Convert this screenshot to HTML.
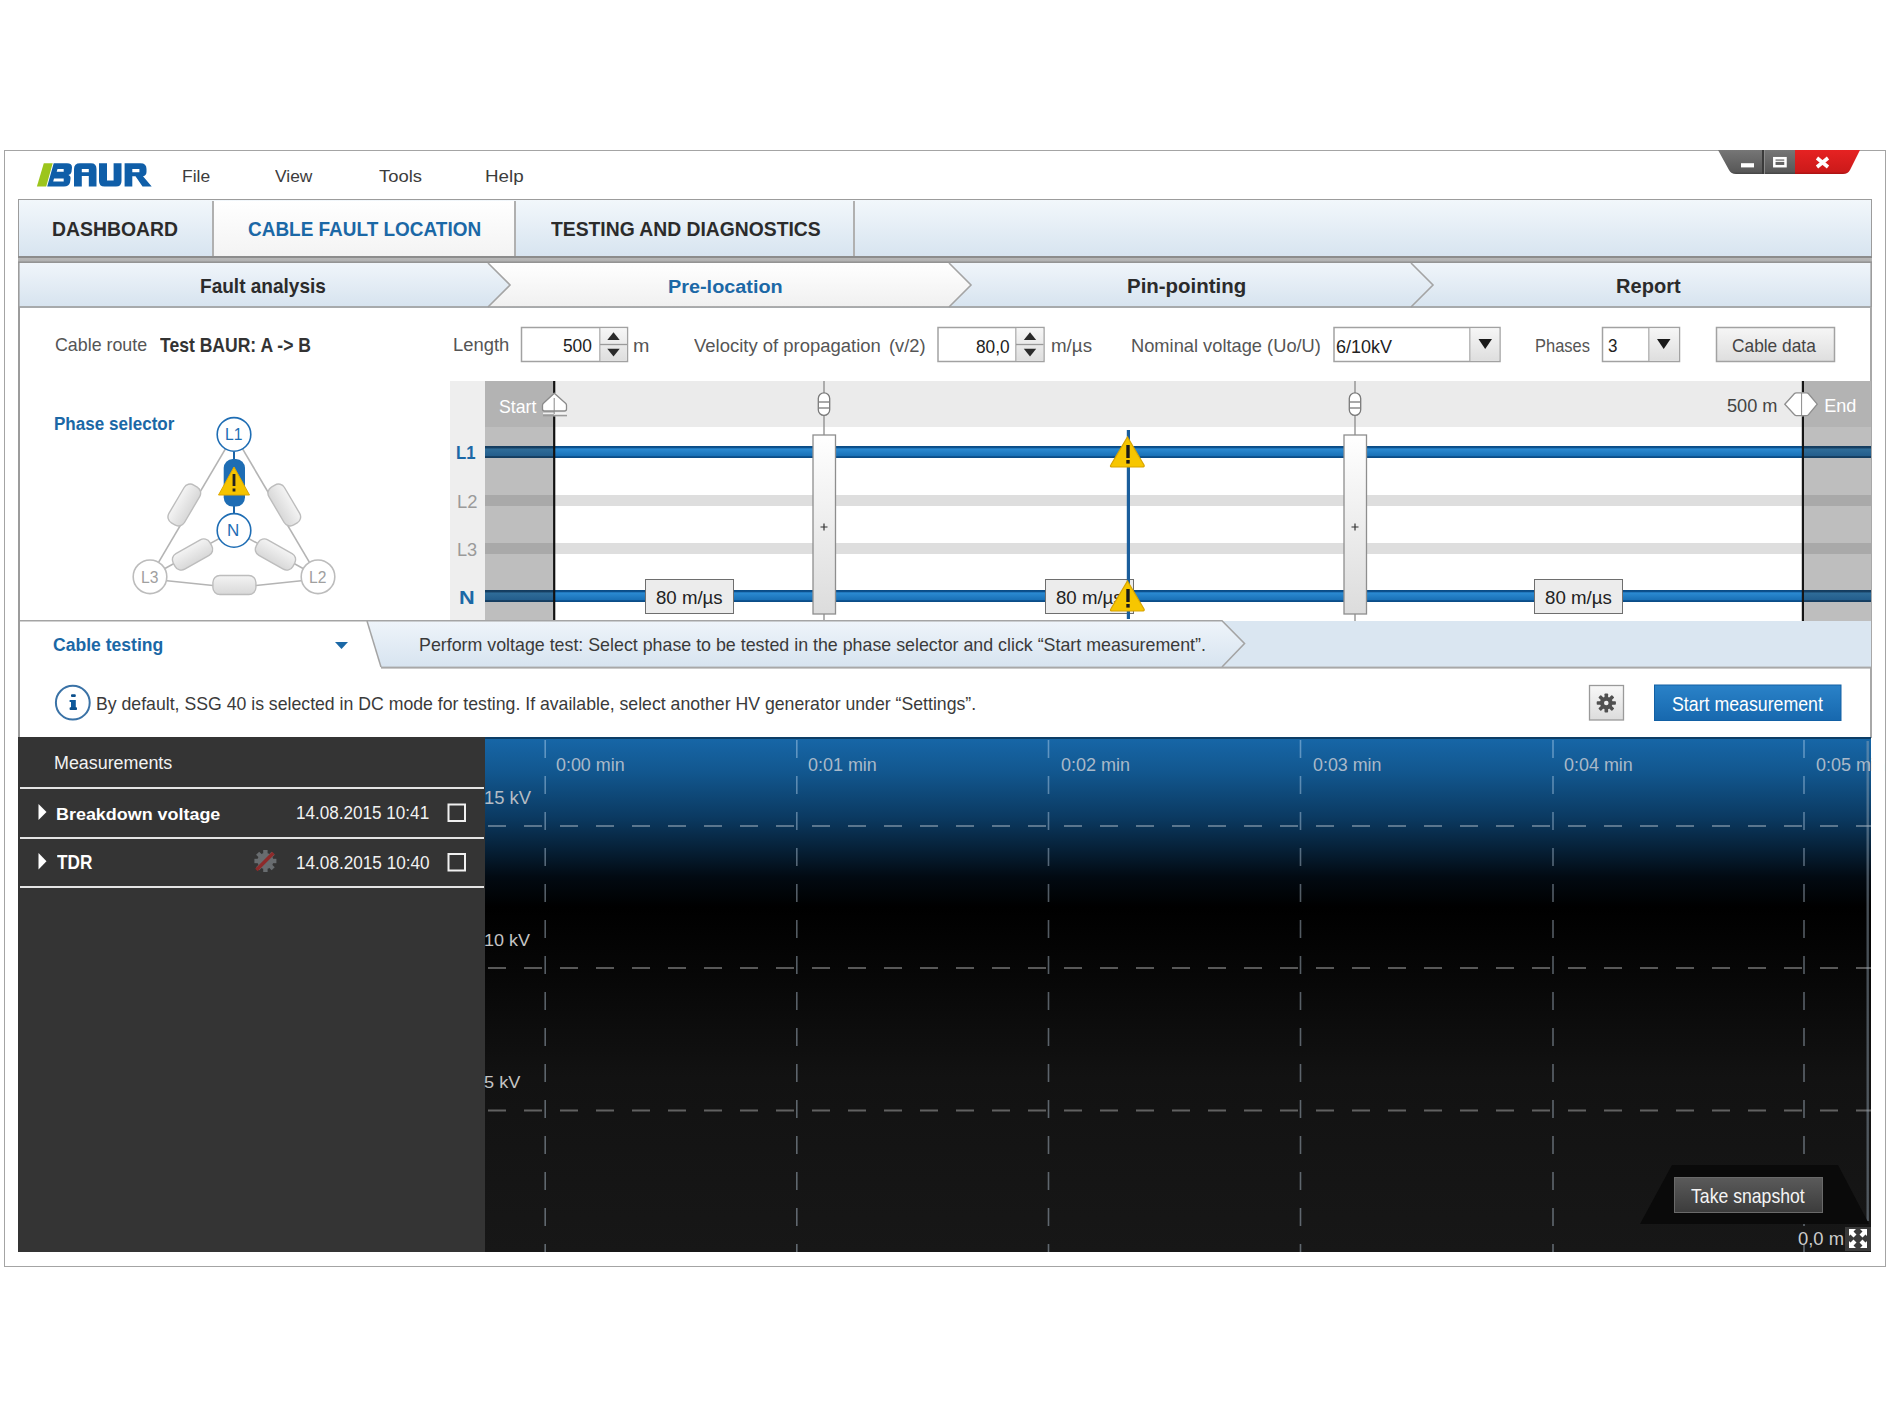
<!DOCTYPE html>
<html><head><meta charset="utf-8">
<style>
*{margin:0;padding:0;box-sizing:border-box}
html,body{width:1890px;height:1417px;overflow:hidden;background:#fff}
body{position:relative;font-family:"Liberation Sans",sans-serif}
.a{position:absolute}
.t{position:absolute;white-space:nowrap;line-height:1;transform-origin:0 0;z-index:5}
svg{position:absolute;overflow:visible}
</style></head><body>
<!-- window frame -->
<div class="a" style="left:4px;top:150px;width:1882px;height:1117px;border:1.5px solid #a4a4a4"></div>

<!-- logo -->
<svg style="left:0;top:0" width="200" height="200">
<polygon points="36.9,186.6 43.8,163.3 52.7,163.3 46.2,186.6" fill="#9cc51c"/>
<path fill="#0f5ea8" fill-rule="evenodd" d="M47.2,186.6 L53.7,163.3 L67,163.3 Q72,163.3 72,167.5 L71.5,172 Q71,174.5 68.5,175 Q71,176 70.5,179 L70,182.5 Q69,186.6 64,186.6 Z M57.5,169 L63.7,169 L63.7,171.8 L56.7,171.8 Z M54,178.4 L63.7,178.4 L63.7,181.5 L53.2,181.5 Z"/>
<path fill="#0f5ea8" fill-rule="evenodd" d="M74,186.6 L74,169 Q74,163.3 80,163.3 L91,163.3 Q96.5,163.3 96.5,169 L96.5,186.6 L88.8,186.6 L88.8,176 L81.8,176 L81.8,186.6 Z M81.8,169 L88.8,169 L88.8,172.2 L81.8,172.2 Z"/>
<path fill="#0f5ea8" d="M99,163.3 L107,163.3 L107,180.4 L113.6,180.4 L113.6,163.3 L121.5,163.3 L121.5,181 Q121.5,186.6 116,186.6 L104.5,186.6 Q99,186.6 99,181 Z"/>
<path fill="#0f5ea8" fill-rule="evenodd" d="M124.6,186.6 L124.6,163.3 L140.5,163.3 Q146.5,163.3 146.5,169 L146.5,172 Q146.5,175.5 143,176.3 L151.7,186.6 L142.5,186.6 L135.5,176.3 L132.3,176.3 L132.3,186.6 Z M132.3,169 L139.4,169 L139.4,172.2 L132.3,172.2 Z"/>
</svg>

<!-- window controls -->
<svg style="left:0;top:0" width="1890" height="200">
<defs>
<linearGradient id="wg" x1="0" y1="0" x2="0" y2="1"><stop offset="0" stop-color="#767676"/><stop offset="0.9" stop-color="#585858"/><stop offset="1" stop-color="#444"/></linearGradient>
<linearGradient id="wr" x1="0" y1="0" x2="0" y2="1"><stop offset="0" stop-color="#e62222"/><stop offset="0.9" stop-color="#cc1a1a"/><stop offset="1" stop-color="#a81212"/></linearGradient>
</defs>
<path d="M1718,150 L1796,150 L1796,174 L1736,174 Q1731,174 1729,170 Z" fill="url(#wg)"/>
<path d="M1795,150 L1860,150 L1850,170 Q1848,174 1843,174 L1795,174 Z" fill="url(#wr)"/>
<rect x="1762" y="150" width="2" height="24" fill="#3a3a3a"/>
<rect x="1764" y="150" width="1" height="24" fill="#8a8a8a"/>
<rect x="1741" y="163.2" width="13" height="4.2" fill="#fff"/>
<rect x="1774.3" y="158.2" width="11.2" height="8" fill="none" stroke="#fff" stroke-width="2.5"/><line x1="1775" y1="161.3" x2="1786" y2="161.3" stroke="#fff" stroke-width="1.2"/>
<path d="M1817,158 L1828,167 M1828,158 L1817,167" stroke="#fff" stroke-width="3.6"/>
</svg>

<!-- main tab bar -->
<div class="a" style="left:18px;top:199px;width:1854px;height:58px;border:1.6px solid #9c9c9c;border-bottom:none;background:linear-gradient(#f2f7fb,#d7e4f0)"></div>
<div class="a" style="left:212px;top:201px;width:304px;height:56px;background:linear-gradient(#ffffff,#f3f3f3);border-left:2px solid #b0b0b0;border-right:2px solid #b0b0b0"></div>
<div class="a" style="left:853px;top:201px;width:2px;height:56px;background:#b0b0b0"></div>
<div class="a" style="left:18px;top:256px;width:1854px;height:7px;background:linear-gradient(#8c8c8c 0,#8c8c8c 1.5px,#b6b6b6 2.5px,#b2b2b2 5px,#8e8e8e 6px,#9a9a9a 7px)"></div>

<!-- step bar -->
<svg style="left:18px;top:263px" width="1854" height="45">
<defs><linearGradient id="sb" x1="0" y1="0" x2="0" y2="1"><stop offset="0" stop-color="#f0f5fa"/><stop offset="1" stop-color="#d6e3ef"/></linearGradient>
<linearGradient id="sw" x1="0" y1="0" x2="0" y2="1"><stop offset="0" stop-color="#ffffff"/><stop offset="1" stop-color="#f0f0f0"/></linearGradient></defs>
<rect x="0" y="0" width="1854" height="45" fill="url(#sb)"/>
<polygon points="470,0 931,0 953,22 931,44 470,44 492,22" fill="url(#sw)"/>
<polyline points="470,0 492,22 470,44" fill="none" stroke="#a4a4a4" stroke-width="1.6"/>
<polyline points="931,0 953,22 931,44" fill="none" stroke="#a4a4a4" stroke-width="1.6"/>
<polyline points="1393,0 1415,22 1393,44" fill="none" stroke="#a4a4a4" stroke-width="1.6"/>
<rect x="0" y="43.2" width="1854" height="1.6" fill="#9c9c9c"/>
<rect x="0" y="0" width="1.6" height="45" fill="#9c9c9c"/>
<rect x="1852.4" y="0" width="1.6" height="45" fill="#9c9c9c"/>
</svg>

<!-- content borders -->
<div class="a" style="left:18px;top:307px;width:1.6px;height:431px;background:#9c9c9c"></div>
<div class="a" style="left:1870.4px;top:307px;width:1.6px;height:431px;background:#a8a8a8"></div>
<!-- parameter row -->
<svg style="left:0;top:0" width="1890" height="400">
<defs>
<linearGradient id="btn" x1="0" y1="0" x2="0" y2="1"><stop offset="0" stop-color="#f6f6f6"/><stop offset="1" stop-color="#dedede"/></linearGradient>
</defs>
<!-- length spin -->
<rect x="521.5" y="327.5" width="106" height="34" fill="#fff" stroke="#a2a2a2" stroke-width="1.5"/>
<rect x="600" y="328.3" width="26.7" height="32.4" fill="url(#btn)"/>
<line x1="599.8" y1="328" x2="599.8" y2="361" stroke="#b0b0b0" stroke-width="1.3"/>
<line x1="600" y1="344.5" x2="627" y2="344.5" stroke="#9a9a9a" stroke-width="1.3"/>
<polygon points="607.3,340 613.5,332.3 619.7,340" fill="#2a2a2a"/>
<polygon points="607.3,348.8 613.5,356.5 619.7,348.8" fill="#2a2a2a"/>
<!-- velocity spin -->
<rect x="938" y="327.5" width="106" height="34" fill="#fff" stroke="#a2a2a2" stroke-width="1.5"/>
<rect x="1016" y="328.3" width="27.3" height="32.4" fill="url(#btn)"/>
<line x1="1015.8" y1="328" x2="1015.8" y2="361" stroke="#b0b0b0" stroke-width="1.3"/>
<line x1="1016" y1="344.5" x2="1043.5" y2="344.5" stroke="#9a9a9a" stroke-width="1.3"/>
<polygon points="1023.8,340 1030,332.3 1036.2,340" fill="#2a2a2a"/>
<polygon points="1023.8,348.8 1030,356.5 1036.2,348.8" fill="#2a2a2a"/>
<!-- nominal combo -->
<rect x="1334" y="327.5" width="166" height="34" fill="#fff" stroke="#a2a2a2" stroke-width="1.5"/>
<rect x="1470" y="328.3" width="29.3" height="32.4" fill="url(#btn)"/>
<line x1="1469.8" y1="328" x2="1469.8" y2="361" stroke="#b0b0b0" stroke-width="1.3"/>
<polygon points="1478.5,339 1492,339 1485.2,349" fill="#1a1a1a"/>
<!-- phases combo -->
<rect x="1602.5" y="327.5" width="77" height="34" fill="#fff" stroke="#a2a2a2" stroke-width="1.5"/>
<rect x="1649" y="328.3" width="29.8" height="32.4" fill="url(#btn)"/>
<line x1="1648.8" y1="328" x2="1648.8" y2="361" stroke="#b0b0b0" stroke-width="1.3"/>
<polygon points="1657,339 1670.5,339 1663.7,349" fill="#1a1a1a"/>
<!-- cable data button -->
<rect x="1716.5" y="327.5" width="118" height="34" fill="url(#btn)" stroke="#a2a2a2" stroke-width="1.5"/>
</svg>

<!-- phase selector graphic -->
<svg style="left:0;top:0" width="400" height="650">
<defs>
<linearGradient id="cap" x1="0" y1="0" x2="0" y2="1"><stop offset="0" stop-color="#f4f4f4"/><stop offset="1" stop-color="#d8d8d8"/></linearGradient>
<linearGradient id="capb" x1="0" y1="0" x2="1" y2="0"><stop offset="0" stop-color="#1a64a8"/><stop offset="0.5" stop-color="#2b7cc4"/><stop offset="1" stop-color="#1a64a8"/></linearGradient>
</defs>
<g stroke="#b4b4b4" stroke-width="1.6" fill="none">
<line x1="234" y1="434.4" x2="150" y2="576.8"/>
<line x1="234" y1="434.4" x2="318" y2="576.8"/>
<polyline points="150,579 213,585.5 256,585.5 318,579"/>
<line x1="234" y1="530.4" x2="150" y2="576.8"/>
<line x1="234" y1="530.4" x2="318" y2="576.8"/>
</g>
<path d="M150,576.8 Q234,590 318,576.8" stroke="#b4b4b4" stroke-width="1.6" fill="none" opacity="0"/>
<line x1="234" y1="452" x2="234" y2="513" stroke="#1a64a8" stroke-width="2"/>
<g fill="url(#cap)" stroke="#bdbdbd" stroke-width="1.4">
<rect x="-22" y="-9" width="44" height="18" rx="7" transform="translate(184.3,505) rotate(-59.5)"/>
<rect x="-22" y="-9" width="44" height="18" rx="7" transform="translate(284.3,505) rotate(59.5)"/>
<rect x="-21.5" y="-9.5" width="43" height="19" rx="7" transform="translate(234.4,585)"/>
<rect x="-21" y="-9" width="42" height="18" rx="7" transform="translate(192.5,554.5) rotate(-29.5)"/>
<rect x="-21" y="-9" width="42" height="18" rx="7" transform="translate(275.5,554.5) rotate(29.5)"/>
</g>
<rect x="223.7" y="459" width="21.3" height="47.6" rx="9" fill="#1e6db4"/>
<g fill="#fff" stroke-width="1.6">
<circle cx="234" cy="434.4" r="16.8" stroke="#1e6db4"/>
<circle cx="234" cy="530.4" r="16.8" stroke="#1e6db4"/>
<circle cx="150" cy="576.8" r="16.8" stroke="#bcbcbc"/>
<circle cx="318" cy="576.8" r="16.8" stroke="#bcbcbc"/>
</g>
<polygon points="234,467 249.5,495 218.5,495" fill="#f5c400" stroke="#e0a800" stroke-width="1"/>
<rect x="232.6" y="474" width="2.8" height="12" fill="#222"/>
<rect x="232.6" y="488.5" width="2.8" height="3" fill="#222"/>
</svg>
<div class="t" style="left:225px;top:426px;font-size:17px;color:#1e6db4;transform:scaleX(0.92)">L1</div>
<div class="t" style="left:227px;top:522px;font-size:17px;color:#1e6db4">N</div>
<div class="t" style="left:141px;top:568.5px;font-size:17px;color:#a0a0a0;transform:scaleX(0.92)">L3</div>
<div class="t" style="left:309px;top:568.5px;font-size:17px;color:#a0a0a0;transform:scaleX(0.92)">L2</div>
<!-- cable diagram -->
<div class="a" style="left:450px;top:381px;width:35px;height:240px;background:#eeeeee"></div>
<div class="a" style="left:485px;top:381px;width:1386px;height:46px;background:#ebebeb"></div>
<div class="a" style="left:485px;top:381px;width:69px;height:240px;background:#bebebe"></div>
<div class="a" style="left:485px;top:381px;width:69px;height:46px;background:#b3b3b3"></div>
<div class="a" style="left:1803px;top:381px;width:68px;height:240px;background:#bebebe"></div>
<div class="a" style="left:1803px;top:381px;width:68px;height:46px;background:#b3b3b3"></div>
<svg style="left:0;top:0" width="1890" height="650">
<defs>
<linearGradient id="bl" x1="0" y1="0" x2="0" y2="1"><stop offset="0" stop-color="#0a4a82"/><stop offset="0.14" stop-color="#0c5290"/><stop offset="0.24" stop-color="#2b8ad2"/><stop offset="0.8" stop-color="#1a72b8"/><stop offset="0.88" stop-color="#0c5290"/><stop offset="1" stop-color="#0a4a82"/></linearGradient>
<linearGradient id="bld" x1="0" y1="0" x2="0" y2="1"><stop offset="0" stop-color="#143c5e"/><stop offset="0.14" stop-color="#163f62"/><stop offset="0.26" stop-color="#2f6c98"/><stop offset="0.8" stop-color="#245e8c"/><stop offset="0.88" stop-color="#163f62"/><stop offset="1" stop-color="#143c5e"/></linearGradient>
<linearGradient id="sl" x1="0" y1="0" x2="0" y2="1"><stop offset="0" stop-color="#ffffff"/><stop offset="1" stop-color="#dcdcdc"/></linearGradient>
</defs>
<!-- bars -->
<rect x="554" y="446" width="1249" height="12" fill="url(#bl)"/>
<rect x="554" y="590" width="1249" height="12" fill="url(#bl)"/>
<rect x="485" y="446" width="69" height="12" fill="url(#bld)"/>
<rect x="485" y="590" width="69" height="12" fill="url(#bld)"/>
<rect x="1803" y="446" width="68" height="12" fill="url(#bld)"/>
<rect x="1803" y="590" width="68" height="12" fill="url(#bld)"/>
<rect x="554" y="495" width="1249" height="11" fill="#dedede"/>
<rect x="554" y="543" width="1249" height="11" fill="#dedede"/>
<rect x="485" y="495" width="69" height="11" fill="#a9a9a9"/>
<rect x="485" y="543" width="69" height="11" fill="#a9a9a9"/>
<rect x="1803" y="495" width="68" height="11" fill="#a9a9a9"/>
<rect x="1803" y="543" width="68" height="11" fill="#a9a9a9"/>
<!-- start/end lines -->
<rect x="553.1" y="381" width="2.2" height="12" fill="#111"/><rect x="553.1" y="416.3" width="2.2" height="204.7" fill="#111"/>
<rect x="1801.8" y="381" width="2.2" height="11.5" fill="#151515"/><rect x="1801.8" y="416.3" width="2.2" height="204.7" fill="#151515"/>
<!-- sliders -->
<g>
<line x1="824" y1="381" x2="824" y2="621" stroke="#8a8a8a" stroke-width="1.3"/>
<rect x="818.3" y="392.8" width="11.4" height="22.6" rx="5.7" fill="#fff" stroke="#7a7a7a" stroke-width="1.3"/>
<line x1="819" y1="402" x2="829" y2="402" stroke="#7a7a7a" stroke-width="1.3"/>
<line x1="819" y1="408" x2="829" y2="408" stroke="#7a7a7a" stroke-width="1.3"/>
<rect x="813" y="435" width="22.5" height="179" fill="url(#sl)" stroke="#8e8e8e" stroke-width="1.3"/>
<path d="M820.5,527 L827.5,527 M824,523.5 L824,530.5" stroke="#333" stroke-width="1.2"/>
</g>
<g transform="translate(531,0)">
<line x1="824" y1="381" x2="824" y2="621" stroke="#8a8a8a" stroke-width="1.3"/>
<rect x="818.3" y="392.8" width="11.4" height="22.6" rx="5.7" fill="#fff" stroke="#7a7a7a" stroke-width="1.3"/>
<line x1="819" y1="402" x2="829" y2="402" stroke="#7a7a7a" stroke-width="1.3"/>
<line x1="819" y1="408" x2="829" y2="408" stroke="#7a7a7a" stroke-width="1.3"/>
<rect x="813" y="435" width="22.5" height="179" fill="url(#sl)" stroke="#8e8e8e" stroke-width="1.3"/>
<path d="M820.5,527 L827.5,527 M824,523.5 L824,530.5" stroke="#333" stroke-width="1.2"/>
</g>
<!-- start marker -->
<path d="M554.3,393.2 L565.8,403.5 Q566.5,404.2 566.5,405.5 L566.5,409 Q566.5,411 564.5,411 L544.5,411 Q542.5,411 542.5,409 L542.5,405.5 Q542.5,404.2 543.2,403.5 Z" fill="#fff" stroke="#8a8a8a" stroke-width="1.3"/>
<line x1="543" y1="413.3" x2="566" y2="413.3" stroke="#f6f6f6" stroke-width="1.2"/>
<line x1="543" y1="415.6" x2="567" y2="415.6" stroke="#9a9a9a" stroke-width="1.5"/>
<line x1="554.2" y1="398" x2="554.2" y2="414" stroke="#888" stroke-width="1"/>
<!-- end marker -->
<path d="M1784.8,404.2 L1794.5,393.5 Q1795.2,392.8 1796.5,392.8 L1806.3,392.8 Q1807.6,392.8 1808.3,393.5 L1817.2,404.2 L1808.3,414.8 Q1807.6,415.6 1806.3,415.6 L1796.5,415.6 Q1795.2,415.6 1794.5,414.8 Z" fill="#fff" stroke="#8e8e8e" stroke-width="1.3"/>
<line x1="1801.6" y1="393" x2="1801.6" y2="415.5" stroke="#8a8a8a" stroke-width="1"/>
</svg>
<!-- speed boxes -->
<div class="a" style="left:645px;top:579px;width:89px;height:35px;background:#ececec;border:1.5px solid #6e6e6e"></div>
<div class="a" style="left:1045px;top:578.5px;width:89px;height:35px;background:#ececec;border:1.5px solid #6e6e6e"></div>
<div class="a" style="left:1534px;top:579px;width:89px;height:35px;background:#ececec;border:1.5px solid #6e6e6e"></div>
<div class="t" id="mFile" style="left:181.60px;top:168.15px;font-size:17.12px;color:#3c3c3c;transform:scaleX(1.0191);">File</div>
<div class="t" id="mView" style="left:275.43px;top:168.15px;font-size:17.12px;color:#3c3c3c;transform:scaleX(1.0152);">View</div>
<div class="t" id="mTools" style="left:378.63px;top:168.15px;font-size:17.12px;color:#3c3c3c;transform:scaleX(1.0758);">Tools</div>
<div class="t" id="mHelp" style="left:485.20px;top:168.15px;font-size:17.12px;color:#3c3c3c;transform:scaleX(1.0984);">Help</div>
<div class="t" id="tDash" style="left:52.24px;top:219.46px;font-size:20.29px;font-weight:bold;color:#2b2b2b;transform:scaleX(0.9551);">DASHBOARD</div>
<div class="t" id="tCfl" style="left:247.74px;top:219.46px;font-size:20.29px;font-weight:bold;color:#1b68a6;transform:scaleX(0.9350);">CABLE FAULT LOCATION</div>
<div class="t" id="tTad" style="left:550.81px;top:219.46px;font-size:20.29px;font-weight:bold;color:#2b2b2b;transform:scaleX(0.9522);">TESTING AND DIAGNOSTICS</div>
<div class="t" id="sFa" style="left:200.27px;top:277.35px;font-size:19.59px;font-weight:bold;color:#2b2b2b;transform:scaleX(0.9723);">Fault analysis</div>
<div class="t" id="sPl" style="left:668.01px;top:277.98px;font-size:18.49px;font-weight:bold;color:#1b68a6;transform:scaleX(1.0738);">Pre-location</div>
<div class="t" id="sPp" style="left:1127.17px;top:277.35px;font-size:19.59px;font-weight:bold;color:#2b2b2b;transform:scaleX(1.0443);">Pin-pointing</div>
<div class="t" id="sRe" style="left:1615.60px;top:276.38px;font-size:20.72px;font-weight:bold;color:#2b2b2b;transform:scaleX(0.9681);">Report</div>
<div class="t" id="pCr" style="left:54.51px;top:336.45px;font-size:18.77px;color:#555555;transform:scaleX(0.9493);">Cable route</div>
<div class="t" id="pTb" style="left:159.82px;top:335.52px;font-size:19.86px;font-weight:bold;color:#333333;transform:scaleX(0.8836);">Test BAUR: A -&gt; B</div>
<div class="t" id="pLen" style="left:452.93px;top:337.05px;font-size:17.95px;color:#555555;transform:scaleX(1.0264);">Length</div>
<div class="t" id="p500" style="left:563.11px;top:336.56px;font-size:18.29px;color:#222222;transform:scaleX(0.9459);">500</div>
<div class="t" id="pM" style="left:633.22px;top:336.57px;font-size:18.50px;color:#555555;transform:scaleX(1.0656);">m</div>
<div class="t" id="pVel" style="left:694.22px;top:337.41px;font-size:18.22px;color:#555555;transform:scaleX(1.0146);">Velocity of propagation</div>
<div class="t" id="pV2" style="left:888.90px;top:337.17px;font-size:18.50px;color:#555555;transform:scaleX(0.9891);">(v/2)</div>
<div class="t" id="p80" style="left:976.01px;top:336.75px;font-size:19.00px;color:#222222;transform:scaleX(0.9091);">80,0</div>
<div class="t" id="pMus" style="left:1050.69px;top:337.17px;font-size:18.50px;color:#555555;transform:scaleX(1.0135);">m/µs</div>
<div class="t" id="pNom" style="left:1131.24px;top:336.67px;font-size:18.50px;color:#555555;transform:scaleX(0.9877);">Nominal voltage (Uo/U)</div>
<div class="t" id="p610" style="left:1336.10px;top:338.17px;font-size:18.50px;color:#222222;transform:scaleX(0.9716);">6/10kV</div>
<div class="t" id="pPh" style="left:1534.68px;top:336.40px;font-size:19.18px;color:#555555;transform:scaleX(0.8583);">Phases</div>
<div class="t" id="p3" style="left:1608.32px;top:336.97px;font-size:18.50px;color:#222222;transform:scaleX(0.9201);">3</div>
<div class="t" id="pCd" style="left:1732.13px;top:336.40px;font-size:19.18px;color:#444444;transform:scaleX(0.9035);">Cable data</div>
<div class="t" id="psel" style="left:54.41px;top:414.88px;font-size:18.49px;font-weight:bold;color:#1b68a6;transform:scaleX(0.9224);">Phase selector</div>
<div class="t" id="dStart" style="left:498.91px;top:397.58px;font-size:18.14px;color:#ffffff;transform:scaleX(0.9766);">Start</div>
<div class="t" id="d500" style="left:1727.47px;top:396.67px;font-size:18.86px;color:#444444;transform:scaleX(0.9633);">500 m</div>
<div class="t" id="dEnd" style="left:1824.16px;top:397.33px;font-size:18.08px;color:#ffffff;">End</div>
<div class="t" id="dL1" style="left:456.33px;top:444.46px;font-size:18.41px;font-weight:bold;color:#1b68a6;transform:scaleX(0.9089);">L1</div>
<div class="t" id="dL2" style="left:456.53px;top:492.67px;font-size:18.86px;color:#9a9a9a;transform:scaleX(0.9740);">L2</div>
<div class="t" id="dL3" style="left:456.55px;top:540.67px;font-size:18.86px;color:#9a9a9a;transform:scaleX(0.9642);">L3</div>
<div class="t" id="dN" style="left:459.48px;top:588.44px;font-size:19.13px;font-weight:bold;color:#1b68a6;transform:scaleX(1.1356);">N</div>
<div class="t" id="b1" style="left:655.75px;top:589.38px;font-size:18.50px;color:#222222;transform:scaleX(1.0069);">80 m/µs</div>
<div class="t" id="b2" style="left:1056.05px;top:589.38px;font-size:18.50px;color:#222222;transform:scaleX(1.0069);">80 m/µs</div>
<div class="t" id="b3" style="left:1545.25px;top:589.38px;font-size:18.50px;color:#222222;transform:scaleX(1.0100);">80 m/µs</div>
<div class="t" id="ct" style="left:53.30px;top:637.35px;font-size:17.95px;font-weight:bold;color:#1b68a6;transform:scaleX(0.9790);">Cable testing</div>
<div class="t" id="perf" style="left:419.08px;top:636.38px;font-size:18.50px;color:#3a3a3a;transform:scaleX(0.9626);">Perform voltage test: Select phase to be tested in the phase selector and click “Start measurement”.</div>
<div class="t" id="info" style="left:95.59px;top:695.27px;font-size:18.50px;color:#3a3a3a;transform:scaleX(0.9552);">By default, SSG 40 is selected in DC mode for testing. If available, select another HV generator under “Settings”.</div>
<div class="t" id="startm" style="left:1672.11px;top:694.79px;font-size:19.43px;color:#ffffff;transform:scaleX(0.9137);">Start measurement</div>
<div class="t" id="meas" style="left:54.17px;top:753.76px;font-size:18.41px;color:#f2f2f2;transform:scaleX(0.9713);">Measurements</div>
<div class="t" id="bdv" style="left:55.75px;top:806.13px;font-size:16.44px;font-weight:bold;color:#ffffff;transform:scaleX(1.0904);">Breakdown voltage</div>
<div class="t" id="tdr" style="left:56.83px;top:853.19px;font-size:19.42px;font-weight:bold;color:#ffffff;transform:scaleX(0.8871);">TDR</div>
<div class="t" id="dt1" style="left:296.43px;top:804.39px;font-size:18.71px;color:#f2f2f2;transform:scaleX(0.9152);">14.08.2015 10:41</div>
<div class="t" id="dt2" style="left:296.43px;top:853.91px;font-size:18.57px;color:#f2f2f2;transform:scaleX(0.9246);">14.08.2015 10:40</div>
<div class="t" id="c0" style="left:556.48px;top:755.71px;font-size:18.22px;color:#a9b9c9;transform:scaleX(0.9830);">0:00 min</div>
<div class="t" id="c1" style="left:808.28px;top:755.71px;font-size:18.22px;color:#a9b9c9;transform:scaleX(0.9859);">0:01 min</div>
<div class="t" id="c2" style="left:1060.58px;top:755.71px;font-size:18.22px;color:#a9b9c9;transform:scaleX(0.9903);">0:02 min</div>
<div class="t" id="c3" style="left:1312.58px;top:755.71px;font-size:18.22px;color:#a9b9c9;transform:scaleX(0.9815);">0:03 min</div>
<div class="t" id="c4" style="left:1564.28px;top:755.71px;font-size:18.22px;color:#a9b9c9;transform:scaleX(0.9859);">0:04 min</div>
<div class="t" id="c5" style="left:1816.28px;top:755.71px;font-size:18.22px;color:#a9b9c9;transform:scaleX(0.9859);">0:05 min</div>
<div class="t" id="k15" style="left:483.83px;top:788.90px;font-size:18.36px;color:#b4bcc4;transform:scaleX(1.0035);">15 kV</div>
<div class="t" id="k10" style="left:483.56px;top:931.61px;font-size:17.40px;color:#c4c4c4;transform:scaleX(1.0356);">10 kV</div>
<div class="t" id="k5" style="left:484.27px;top:1073.91px;font-size:17.40px;color:#c4c4c4;transform:scaleX(1.0440);">5 kV</div>
<div class="t" id="snap" style="left:1691.35px;top:1187.05px;font-size:19.59px;color:#f4f4f4;transform:scaleX(0.9009);">Take snapshot</div>
<div class="t" id="zm" style="left:1798.26px;top:1229.91px;font-size:18.57px;color:#cccccc;transform:scaleX(0.9913);">0,0 m</div>
<!-- fault marker (above texts) -->
<svg style="left:0;top:0;z-index:6" width="1890" height="650">
<rect x="1126.8" y="430" width="3.2" height="189" fill="#1a5e9c"/>
<g id="warn">
<path d="M1127.5,437 L1144,465 Q1145,467 1142,467 L1112.5,467 Q1109.5,467 1110.8,465 Z" fill="#f7c600" stroke="#d9a400" stroke-width="1.2"/>
</g>
<path d="M1127.5,581 L1144,609 Q1145,611 1142,611 L1112.5,611 Q1109.5,611 1110.8,609 Z" fill="#f7c600" stroke="#d9a400" stroke-width="1.2"/>
<rect x="1126.3" y="445" width="3.4" height="13" fill="#1a1a1a"/>
<rect x="1126.3" y="460" width="3.4" height="3.6" fill="#1a1a1a"/>
<rect x="1126.3" y="589" width="3.4" height="13" fill="#1a1a1a"/>
<rect x="1126.3" y="604" width="3.4" height="3.6" fill="#1a1a1a"/>
</svg>
<!-- cable testing bar -->
<svg style="left:0;top:600px" width="1890" height="150">
<defs>
<linearGradient id="ctb" x1="0" y1="0" x2="0" y2="1"><stop offset="0" stop-color="#eef4fa"/><stop offset="1" stop-color="#d7e4f0"/></linearGradient>
</defs>
<rect x="1222" y="21" width="649" height="47" fill="#dae6f1"/>
<polygon points="367,21 1222,21 1244.5,43.5 1222,67 381,67" fill="url(#ctb)"/>
<polyline points="20,20.8 367,20.8 1222,20.8 1244.5,43.5 1222,67" fill="none" stroke="#a4a4a4" stroke-width="1.6"/>
<line x1="367" y1="21" x2="381" y2="67" stroke="#a4a4a4" stroke-width="1.5"/>
<rect x="381" y="66.6" width="1490" height="2" fill="#a8a8a8"/>
<polygon points="335,642 348,642 341.5,649" transform="translate(0,-600)" fill="#1b68a6"/>
</svg>

<!-- info row -->
<svg style="left:0;top:0" width="1890" height="800">
<defs>
<linearGradient id="smb" x1="0" y1="0" x2="0" y2="1"><stop offset="0" stop-color="#2a82c8"/><stop offset="1" stop-color="#1768ae"/></linearGradient>
<linearGradient id="gb" x1="0" y1="0" x2="0" y2="1"><stop offset="0" stop-color="#f8f8f8"/><stop offset="1" stop-color="#dcdcdc"/></linearGradient>
</defs>
<circle cx="72.8" cy="702.7" r="16.9" fill="#fff" stroke="#3a72a6" stroke-width="2"/>
<rect x="71" y="700" width="4.8" height="10" fill="#0f5a9c"/>
<rect x="69.6" y="700" width="5" height="2" fill="#0f5a9c"/>
<rect x="69.6" y="707.2" width="7.4" height="2.8" rx="0.8" fill="#0b4f8c"/>
<rect x="71" y="694.2" width="4.8" height="2.8" rx="1" fill="#0b4f8c"/>
<rect x="1589.5" y="685.5" width="34" height="34.5" fill="url(#gb)" stroke="#9a9a9a" stroke-width="1.3"/>
<g transform="translate(1606.3,703)" fill="#505050">
<circle r="6.3"/>
<rect x="-1.8" y="-9.6" width="3.6" height="19.2" rx="0.8"/><rect x="-1.8" y="-9.6" width="3.6" height="19.2" rx="0.8" transform="rotate(45)"/><rect x="-1.8" y="-9.6" width="3.6" height="19.2" rx="0.8" transform="rotate(90)"/><rect x="-1.8" y="-9.6" width="3.6" height="19.2" rx="0.8" transform="rotate(135)"/>
<circle r="2.3" fill="#f0f0f0"/>
</g>
<rect x="1654.5" y="685" width="186.5" height="35.5" fill="url(#smb)" stroke="#1260a4" stroke-width="1"/>
</svg>

<!-- dark area -->
<div class="a" style="left:18px;top:737px;width:467px;height:515px;background:#343434"></div>
<div class="a" style="left:20px;top:787px;width:464px;height:2px;background:#e4e4e4"></div>
<div class="a" style="left:20px;top:836.5px;width:464px;height:2px;background:#e4e4e4"></div>
<div class="a" style="left:20px;top:886px;width:464px;height:2px;background:#e4e4e4"></div>
<svg style="left:0;top:0" width="500" height="900">
<polygon points="38.5,804 38.5,820 46.5,812" fill="#fff"/>
<polygon points="38.5,853 38.5,869.5 46.5,861.2" fill="#fff"/>
<rect x="448.5" y="804.5" width="16.5" height="16.5" fill="none" stroke="#f0f0f0" stroke-width="2"/>
<rect x="448.5" y="854" width="16.5" height="16.5" fill="none" stroke="#f0f0f0" stroke-width="2"/>
<g transform="translate(265.4,861)" fill="#686c6f">
<circle r="8"/>
<rect x="-2.2" y="-11" width="4.4" height="22"/><rect x="-2.2" y="-11" width="4.4" height="22" transform="rotate(45)"/><rect x="-2.2" y="-11" width="4.4" height="22" transform="rotate(90)"/><rect x="-2.2" y="-11" width="4.4" height="22" transform="rotate(135)"/>
<line x1="-9" y1="9" x2="8" y2="-8" stroke="#8e2a2a" stroke-width="3.4"/>
</g>
</svg>

<!-- chart -->
<div class="a" style="left:485px;top:737px;width:1386px;height:515px;background:linear-gradient(#1767a8 0px,#12578f 35px,#0b3a62 80px,#020a12 140px,#000 170px,#060606 230px,#121212 340px,#171717 515px)"></div>
<div class="a" style="left:485px;top:737px;width:1386px;height:1.5px;background:#0c3d66"></div>
<svg style="left:485px;top:737px" width="1386" height="515">
<g stroke="#ffffff" stroke-width="1.8" stroke-dasharray="18 18" opacity="0.33">
<line x1="0" y1="89" x2="1386" y2="89" stroke-dashoffset="-3"/>
<line x1="0" y1="231" x2="1386" y2="231" stroke-dashoffset="-3"/>
<line x1="0" y1="373.5" x2="1386" y2="373.5" stroke-dashoffset="-3"/>
</g>
<g stroke="#d8ecff" stroke-width="1.6" stroke-dasharray="18 18" opacity="0.38">
<line x1="60.2" y1="3" x2="60.2" y2="515"/>
<line x1="311.8" y1="3" x2="311.8" y2="515"/>
<line x1="563.5" y1="3" x2="563.5" y2="515"/>
<line x1="815.5" y1="3" x2="815.5" y2="515"/>
<line x1="1068" y1="3" x2="1068" y2="515"/>
<line x1="1319" y1="3" x2="1319" y2="515"/>
</g>
<rect x="1381.5" y="4" width="2.4" height="480" fill="#9ab" opacity="0.45"/>
<polygon points="1155,487 1187,428 1353,428 1384,487" fill="#0a0a0a"/>
</svg>
<div class="a" style="left:1674px;top:1177px;width:149px;height:36px;background:linear-gradient(#5a5a5a,#3c3c3c);border:1px solid #6a6a6a"></div>
<div class="a" style="left:1845px;top:1226.5px;width:26px;height:24px;background:#3a3a3a"></div>
<svg style="left:1845px;top:1226px" width="26" height="25">
<g fill="#fff">
<polygon points="4,3 11,3 8.5,5.5 11.5,8.5 8.5,11.5 5.5,8.5 4,10"/>
<polygon points="22,3 15,3 17.5,5.5 14.5,8.5 17.5,11.5 20.5,8.5 22,10"/>
<polygon points="4,22 11,22 8.5,19.5 11.5,16.5 8.5,13.5 5.5,16.5 4,15"/>
<polygon points="22,22 15,22 17.5,19.5 14.5,16.5 17.5,13.5 20.5,16.5 22,15"/>
</g>
</svg>

<div class="a" style="left:1872px;top:740px;width:12px;height:60px;background:#fff;z-index:7"></div>
</body></html>
